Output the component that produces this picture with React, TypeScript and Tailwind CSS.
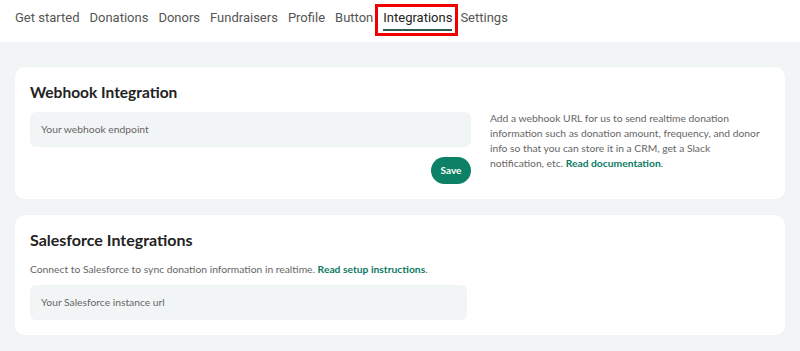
const tabs = [
  "Get started",
  "Donations",
  "Donors",
  "Fundraisers",
  "Profile",
  "Button",
  "Integrations",
  "Settings",
];

const App = () => {
  return (
    <div className="min-h-[351px] bg-[#f2f5f5] font-['Lato',sans-serif]">
      <nav className="flex h-[42px] items-start gap-[10px] bg-white px-[15px] pt-[10px] font-['Roboto',sans-serif] text-[13px] leading-[15px] text-[#555]">
        {tabs.map((tab) =>
          tab === "Integrations" ? (
            <div
              key={tab}
              className="-mx-[8px] -mt-[6px] flex h-[32px] items-start border-[3px] border-[#f00000] pl-[5px] pr-[3px]"
            >
              <span className="border-b-2 border-[#2c5e4a] pt-[3px] pb-[4px] text-[#222]">
                {tab}
              </span>
            </div>
          ) : (
            <span key={tab}>{tab}</span>
          ),
        )}
      </nav>

      <main className="flex flex-col gap-[16px] px-[15px] pt-[25px] pb-[17px]">
        <section className="flex gap-[19px] rounded-[10px] bg-white px-[15px] pt-[15px] pb-[15px]">
          <div className="flex w-[441px] flex-shrink-0 flex-col">
            <h2 className="text-[15.5px] font-bold leading-[20px] text-[#222]">
              Webhook Integration
            </h2>
            <div className="mt-[10px] flex h-[35px] items-center rounded-[6px] bg-[#f2f5f5] px-[11px] text-[10.3px] text-[#666]">
              Your webhook endpoint
            </div>
            <div className="mt-[10px] flex justify-end">
              <button className="h-[27px] w-[40px] rounded-full bg-[#0c8165] text-[10px] font-bold text-white">
                Save
              </button>
            </div>
          </div>
          <p className="mt-[29px] w-[274px] text-[10.3px] leading-[15px] text-[#666]">
            Add a webhook URL for us to send realtime donation information such
            as donation amount, frequency, and donor info so that you can store
            it in a CRM, get a Slack notification, etc.{" "}
            <span className="font-bold text-[#0c7a63]">Read documentation</span>
            .
          </p>
        </section>

        <section className="flex flex-col rounded-[10px] bg-white px-[15px] pt-[15px] pb-[15px]">
          <h2 className="text-[16px] font-bold leading-[20px] text-[#222]">
            Salesforce Integrations
          </h2>
          <p className="mt-[12px] text-[10.3px] leading-[15px] text-[#666]">
            Connect to Salesforce to sync donation information in realtime.{" "}
            <span className="font-bold text-[#0c7a63]">
              Read setup instructions
            </span>
            .
          </p>
          <div className="mt-[8px] flex h-[35px] w-[437px] items-center rounded-[6px] bg-[#f2f5f5] px-[11px] text-[10.3px] text-[#666]">
            Your Salesforce instance url
          </div>
        </section>
      </main>
    </div>
  );
};

export default App;
